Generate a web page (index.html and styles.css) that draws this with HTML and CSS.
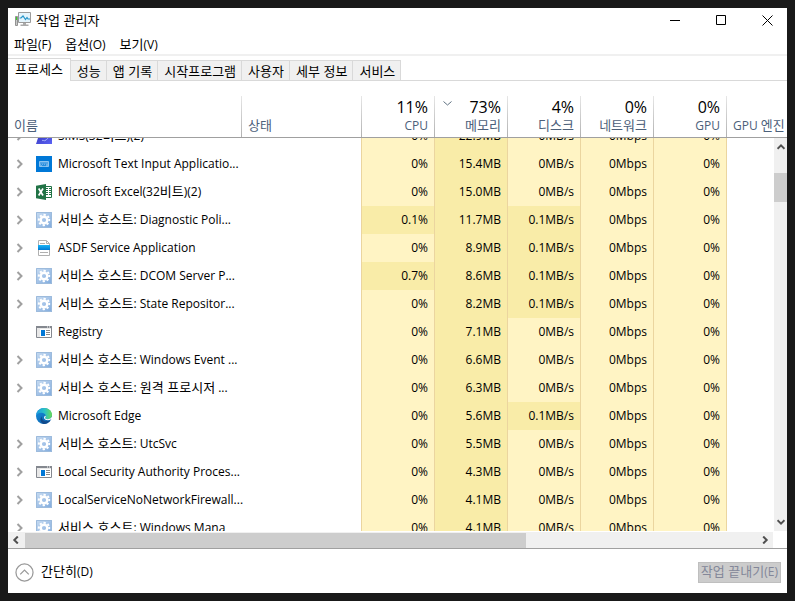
FILE: index.html
```html
<!DOCTYPE html>
<html lang="ko">
<head>
<meta charset="utf-8">
<title>작업 관리자</title>
<link rel="stylesheet" href="styles.css">
</head>
<body>
<svg class="sprites" aria-hidden="true">
  <defs>
    <linearGradient id="g-blue" x1="0" y1="0" x2="1" y2="1"><stop offset="0" stop-color="#c8dcf2"/><stop offset="1" stop-color="#7faadd"/></linearGradient>
    <linearGradient id="g-doc" x1="0" y1="0" x2="0" y2="1"><stop offset="0" stop-color="#19b5f5"/><stop offset="1" stop-color="#0078d4"/></linearGradient>
    <linearGradient id="g-edge" x1="0" y1="0" x2="1" y2="0"><stop offset="0" stop-color="#1c9be0"/><stop offset=".55" stop-color="#2cc2c4"/><stop offset="1" stop-color="#6bdc55"/></linearGradient>
    <linearGradient id="g-edge2" x1="0" y1="0" x2="1" y2="1"><stop offset="0" stop-color="#1490df"/><stop offset="1" stop-color="#0c59a4"/></linearGradient>
    <linearGradient id="g-sims" x1="0" y1="0" x2="1" y2="1"><stop offset="0" stop-color="#3434b8"/><stop offset="1" stop-color="#5a62f5"/></linearGradient>
  </defs>
  <symbol id="i-gear" viewBox="0 0 16 16">
    <path fill="url(#g-blue)" d="M0 0h16v16H0z"/><path fill="none" stroke="#9dbbdc" d="M.5.5h15v15H.5z"/>
    <circle cx="8" cy="8" r="3.300" fill="none" stroke="#fff" stroke-width="2.400"/>
    <circle cx="8" cy="8" r="5.200" fill="none" stroke="#fff" stroke-width="2" stroke-dasharray="2.200 1.884" transform="rotate(-12 8 8)"/>
  </symbol>
  <symbol id="i-input" viewBox="0 0 16 16">
    <path fill="#0078d7" d="M0 0h16v16H0z"/><path fill="#68b0ea" stroke="#8cc3f0" d="M3.500 5.500h9v5h-9z"/>
    <path stroke="#0078d7" stroke-width=".8" stroke-dasharray="1 1" d="M4.500 7h7M5 8.300h6"/><path stroke="#0078d7" stroke-width=".7" d="M6 9.600h4"/>
  </symbol>
  <symbol id="i-excel" viewBox="0 0 16 16">
    <path fill="#fff" stroke="#217346" d="M8.500 2.500h7v11h-7z"/><path stroke="#217346" stroke-dasharray="2 1" d="M10 4.500h5M10 6.500h5M10 8.500h5M10 10.500h5"/>
    <path fill="#217346" d="M0 1.800 10 0v16L0 14.200z"/><path stroke="#fff" stroke-width="1.700" d="m2.700 4.500 4.300 7M7 4.500l-4.300 7"/>
  </symbol>
  <symbol id="i-doc" viewBox="0 0 16 16">
    <path fill="#fff" stroke="#b0b0b0" d="M2.500.5h8l3 3v12h-11z"/><path fill="none" stroke="#b0b0b0" d="M10.500.5v3h3M4 3.500h5M4 12.500h8"/>
    <path fill="url(#g-doc)" d="M2 5h12v5H2z"/>
  </symbol>
  <symbol id="i-app" viewBox="0 0 16 16">
    <path fill="#fff" stroke="#84888f" d="M.5 2.500h15v11H.5z"/><path fill="#84888f" d="M0 2h16v2H0z"/><path stroke="#fff" d="M11 3h1M13 3h1"/>
    <path fill="#e8e8e8" d="M1 4h14v9H1z"/><path fill="#fff" d="M4 5h11v8H4z"/><path fill="#0078d7" d="M5 6h4v6H5z"/><path stroke="#8b8b8b" d="M10 6.500h4M10 8.500h4M10 10.500h4"/>
  </symbol>
  <symbol id="i-edge" viewBox="0 0 16 16">
    <circle cx="8" cy="8" r="8" fill="url(#g-edge2)"/>
    <path fill="url(#g-edge)" d="M.1 7C.7 3 4 0 8 0c4.800 0 8 3.200 8 7 0 2.600-2 4.200-4.300 4.200-1.500 0-2.600-.5-2.600-1.200 0-.4.7-.7.7-1.900C9.800 6 7.700 4.700 5.400 4.700 2.900 4.700.9 5.700.1 7z"/>
    <path fill="#fff" d="M9 7.800c-.5.700-1.200 1.400-.9 2.400.7 2 4.300 2.600 6.700 1.300l1.200-.2V8.500c-.8 1.700-2.600 2.700-4.300 2.700-1.500 0-2.600-.5-2.600-1.200 0-.4.7-.7.7-1.900z"/>
    <path fill="#114a8b" d="M5.800 8.200c-.6 3.300 2.700 6.300 8 4.600-1.300 2-3.400 3.200-5.800 3.200-3-.7-5-4.800-2.200-7.800z"/>
  </symbol>
  <symbol id="i-sims" viewBox="0 0 16 16"><path fill="url(#g-sims)" d="M4 4h12v12H0z"/><path fill="none" stroke="#aab4ff" d="M6 13c1-2 2 1 4-1 1-1 2-1 2-3"/></symbol>
  <symbol id="i-right" viewBox="0 0 8 10"><path fill="none" stroke="#a0a0a0" stroke-width="2" d="m1.500 1 4 4-4 4"/></symbol>
  <symbol id="i-scroll" viewBox="0 0 8 8"><path fill="none" stroke="#505050" stroke-width="2" d="M.5 5.800 4 2.300l3.500 3.500"/></symbol>
</svg>

<main class="window">
  <header class="titlebar">
    <svg class="icon" viewBox="0 0 16 16" aria-hidden="true">
      <path fill="#c8c8c8" stroke="#929292" d="M.5 4.500h2v9h-2z"/><path fill="#39d629" d="M1 5h1v3H1z"/>
      <path fill="#e4f4fc" stroke="#9b9b9b" d="M3.500.5h12v10h-12z"/><path fill="none" stroke="#2494c8" stroke-width="1.200" d="M4.500 6h1.500l2-2 2.500 3.500 1.500-2L13 7h2"/>
      <path fill="#aaa" d="M8 11h3v1.500h2.500V14H5.500v-1.500H8z"/>
    </svg>
    <h1 class="title">작업 관리자</h1>
    <div class="controls">
      <button class="control" aria-label="최소화"><svg viewBox="0 0 11 11"><path d="M0 5.500h10"/></svg></button>
      <button class="control" aria-label="최대화"><svg viewBox="0 0 11 11"><path d="M.5.5h9v9h-9z"/></svg></button>
      <button class="control" aria-label="닫기"><svg viewBox="0 0 11 11"><path d="m.5.5 10 10m0-10-10 10"/></svg></button>
    </div>
  </header>

  <nav class="menu">
    <button><span class="ko">파일</span>(F)</button><button><span class="ko">옵션</span>(O)</button><button><span class="ko">보기</span>(V)</button>
  </nav>

  <div class="tabs ko" role="tablist">
    <button class="tab active" role="tab" aria-selected="true">프로세스</button>
    <button class="tab" role="tab">성능</button>
    <button class="tab" role="tab">앱 기록</button>
    <button class="tab" role="tab">시작프로그램</button>
    <button class="tab" role="tab">사용자</button>
    <button class="tab" role="tab">세부 정보</button>
    <button class="tab" role="tab">서비스</button>
  </div>

  <table class="grid head">
    <colgroup><col class="c-name"><col class="c-state"><col class="c-num"><col class="c-num"><col class="c-num"><col class="c-num"><col class="c-num"><col></colgroup>
    <thead><tr>
      <th class="text"><span class="ko">이름</span></th><th class="text"><span class="ko">상태</span></th>
      <th><b>11%</b>CPU</th>
      <th><svg class="sort" viewBox="0 0 9 5" aria-hidden="true"><path d="m.5.5 4 3.500 4-3.500"/></svg><b>73%</b><span class="ko">메모리</span></th>
      <th><b>4%</b><span class="ko">디스크</span></th><th><b>0%</b><span class="ko">네트워크</span></th><th><b>0%</b>GPU</th><th class="text">GPU <span class="ko">엔진</span></th>
    </tr></thead>
  </table>

  <div class="viewport">
    <div class="rows">
      <table class="grid body">
        <colgroup><col class="c-name"><col class="c-state"><col class="c-num"><col class="c-num"><col class="c-num"><col class="c-num"><col class="c-num"><col></colgroup>
        <tbody id="processes"></tbody>
      </table>
    </div>
    <div class="vbar" aria-hidden="true">
      <svg class="arrow"><use href="#i-scroll"/></svg><div class="vthumb"></div><svg class="arrow down"><use href="#i-scroll"/></svg>
    </div>
  </div>
  <div class="hbar" aria-hidden="true">
    <svg class="arrow left"><use href="#i-scroll"/></svg><div class="htrack"><div class="hthumb"></div></div><svg class="arrow right"><use href="#i-scroll"/></svg>
  </div>

  <footer class="footer">
    <button class="fewer"><svg viewBox="0 0 20 20" aria-hidden="true"><circle cx="10" cy="10" r="9"/><path d="m5.500 12 4.500-4.500 4.500 4.500"/></svg><span><span class="ko">간단히</span>(D)</span></button>
    <button class="end" disabled><span class="ko">작업 끝내기</span>(E)</button>
  </footer>
</main>
<script src="script.js"></script>
</body>
</html>
```
FILE: styles.css
```css
* { box-sizing: border-box; }

body {
  margin: 0;
  padding: 8px;
  height: 100vh;
  background: #191919;
  color: #000;
  font: 12px/18px "Open Sans", "Noto Sans CJK KR", sans-serif;
}

button {
  margin: 0;
  padding: 0;
  border: 0;
  background: none;
  color: inherit;
  font: inherit;
}

/* Hangul is set one step larger than the Latin text beside it. */
.ko { font-family: "Noto Sans CJK KR", sans-serif; font-size: 13px; line-height: 1; }

svg { display: block; }
.sprites { position: absolute; width: 0; height: 0; }
.icon { width: 16px; height: 16px; flex: none; }

.window {
  display: flex;
  flex-direction: column;
  height: 100%;
  overflow: hidden;
  background: #fff;
}

.titlebar { display: flex; align-items: center; height: 24px; padding-left: 7px; flex: none; }
.title { margin: 0 auto 0 5px; font: 13px/20px "Noto Sans CJK KR", sans-serif; }
.controls { display: flex; gap: 6px; }
.control { display: grid; place-items: center; width: 40px; height: 24px; }
.control svg { width: 11px; height: 11px; fill: none; stroke: #000; }

.menu {
  display: flex;
  gap: 14px;
  flex: none;
  height: 24px;
  padding: 3px 6px 0;
  border-bottom: 2px solid #f0f0f0;
}
.menu button { height: 20px; }

.tabs {
  display: flex;
  align-items: flex-end;
  flex: none;
  height: 25px;
  box-shadow: inset 0 -1px #d9d9d9;
}
.tab {
  height: 21px;
  padding: 0 5px 0 6px;
  border: 1px solid #d9d9d9;
  border-left: 0;
  background: #f0f0f0;
  line-height: 18px;
}
.tab.active { height: 23px; padding: 0 7px 3px; border-bottom: 0; background: #fff; }

.grid { width: 100%; table-layout: fixed; border-collapse: separate; border-spacing: 0; }
.c-name { width: 234px; }
.c-state { width: 120px; }
.c-num { width: 73px; }
.grid th, .grid td { padding: 0 6px; text-align: right; white-space: nowrap; }

.head { flex: none; padding-top: 15px; border-bottom: 1px solid #a0a0a0; }
.head th {
  position: relative;
  height: 41px;
  padding-bottom: 2px;
  color: #4c607a;
  font-weight: 400;
  vertical-align: bottom;
  border-right: 1px solid;
  border-image: linear-gradient(#e8e8e8, #b0b0b0) 1;
}
.head th:last-child { border: 0; }
.head .text { text-align: left; }
.head b { display: block; color: #000; font-size: 16px; line-height: 20px; font-weight: 400; }
.sort { position: absolute; top: 5px; left: 8px; width: 9px; height: 5px; fill: none; stroke: #5f7181; }

.viewport { display: flex; flex: 1; min-height: 0; }
.rows { flex: 1; min-width: 0; overflow: hidden; }
.body { margin-top: -16px; }
.body td { height: 28px; }
.body .state { border-right: 1px solid #ebd59f; }
.body .num { border-right: 1px solid #ebd59f; background: #fff4c4; }
.body .num.warm { background: #f9eca8; }
.process { display: flex; align-items: center; gap: 6px; }
.expand { width: 16px; height: 10px; padding-left: 2px; flex: none; }
.expand svg { width: 8px; height: 10px; }

.arrow { width: 8px; height: 8px; flex: none; }
.down { transform: rotate(180deg); }
.left { transform: rotate(-90deg); }
.right { transform: rotate(90deg); }
.vbar {
  display: flex;
  flex-direction: column;
  align-items: center;
  width: 13px;
  padding: 5px 0;
  background: #f0f0f0;
}
.vthumb { width: 13px; height: 29px; margin: 22px 0 auto; background: #cdcdcd; }
.hbar {
  display: flex;
  align-items: center;
  flex: none;
  height: 16px;
  margin: 1px 14px 0 0;
  padding: 0 4px;
  background: #f0f0f0;
}
.htrack { flex: 1; margin: 0 5px; }
.hthumb { width: 68.5%; height: 15px; background: #cdcdcd; }

.footer {
  display: flex;
  align-items: center;
  justify-content: space-between;
  flex: none;
  height: 45px;
  padding: 2px 6px 0 7px;
  border-top: 1px solid #a0a0a0;
}
.fewer { display: flex; align-items: center; gap: 7px; }
.fewer svg { width: 19px; height: 19px; fill: none; stroke: #999; stroke-width: 1.3; }
.end {
  height: 21px;
  padding: 0 2px;
  border: 1px solid #bfbfbf;
  background: #ccc;
  color: #838799;
}
```
FILE: script.js
```js
const processes = [
  ["sims", "SIMS(32비트)(2)", "0%", "22.9MB", "0MB/s", true],
  ["input", "Microsoft Text Input Applicatio...", "0%", "15.4MB", "0MB/s", true],
  ["excel", "Microsoft Excel(32비트)(2)", "0%", "15.0MB", "0MB/s", true],
  ["gear", "서비스 호스트: Diagnostic Poli...", "0.1%", "11.7MB", "0.1MB/s", true],
  ["doc", "ASDF Service Application", "0%", "8.9MB", "0.1MB/s", true],
  ["gear", "서비스 호스트: DCOM Server P...", "0.7%", "8.6MB", "0.1MB/s", true],
  ["gear", "서비스 호스트: State Repositor...", "0%", "8.2MB", "0.1MB/s", true],
  ["app", "Registry", "0%", "7.1MB", "0MB/s", false],
  ["gear", "서비스 호스트: Windows Event ...", "0%", "6.6MB", "0MB/s", true],
  ["gear", "서비스 호스트: 원격 프로시저 ...", "0%", "6.3MB", "0MB/s", true],
  ["edge", "Microsoft Edge", "0%", "5.6MB", "0.1MB/s", false],
  ["gear", "서비스 호스트: UtcSvc", "0%", "5.5MB", "0MB/s", true],
  ["app", "Local Security Authority Proces...", "0%", "4.3MB", "0MB/s", true],
  ["gear", "LocalServiceNoNetworkFirewall...", "0%", "4.1MB", "0MB/s", true],
  ["gear", "서비스 호스트: Windows Mana", "0%", "4.1MB", "0MB/s", true],
];

const cell = (value, warm) => `<td class="num${warm ? " warm" : ""}">${value}</td>`;
const label = (text) => text.replace(/[가-힣]+(?: [가-힣]+)*/g, '<span class="ko">$&</span>');

document.getElementById("processes").innerHTML = processes.map(([icon, name, cpu, memory, disk, group]) => `
  <tr>
    <td><div class="process">
      ${group ? `<button class="expand" aria-label="확장"><svg><use href="#i-right"/></svg></button>` : `<span class="expand"></span>`}
      <svg class="icon"><use href="#i-${icon}"/></svg><span>${label(name)}</span>
    </div></td>
    <td class="state"></td>
    ${cell(cpu, cpu !== "0%")}${cell(memory, true)}${cell(disk, disk !== "0MB/s")}${cell("0Mbps")}${cell("0%")}
    <td></td>
  </tr>`).join("");
```
